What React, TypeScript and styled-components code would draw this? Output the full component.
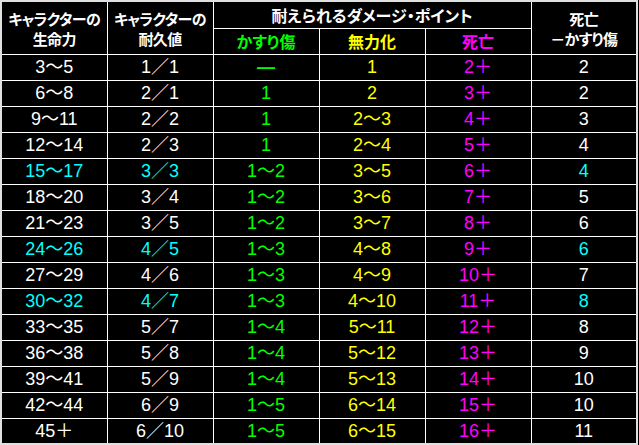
import styled, { createGlobalStyle } from "styled-components";

const GlobalStyle = createGlobalStyle`
  html, body {
    margin: 0;
    padding: 0;
    background: #000;
  }
  body {
    font-family: "Liberation Sans", "Noto Sans CJK JP", sans-serif;
  }
`;

const WHITE = "#ffffff";
const CYAN = "#00ffff";
const GREEN = "#00ff00";
const YELLOW = "#ffff00";
const MAGENTA = "#ff00ff";

const Table = styled.table`
  width: 638px;
  table-layout: fixed;
  border-collapse: collapse;
  background: #000;
  border: 2px solid #e0e0e0;
`;

const HeadRow = styled.tr<{ $h: number }>`
  height: ${(p) => p.$h}px;
`;

const HeadCell = styled.th<{ $color?: string; $tight?: boolean }>`
  border: 1px solid #fff;
  padding: ${(p) => (p.$tight ? "3px 0 0" : "0")};
  color: ${(p) => p.$color || WHITE};
  font-family: "Noto Sans CJK JP", sans-serif;
  font-feature-settings: "palt";
  font-size: ${(p) => (p.$tight ? 15 : 16)}px;
  font-weight: 700;
  letter-spacing: ${(p) => (p.$tight ? "-0.6px" : "0")};
  line-height: 20px;
  text-align: center;
  vertical-align: middle;
  white-space: nowrap;
`;

const HeadLine = styled.span`
  display: block;
  height: 20px;
  overflow: hidden;
`;

const Row = styled.tr`
  height: 26px;
`;

const Cell = styled.td<{ $color: string; $bold?: boolean }>`
  border: 1px solid #fff;
  padding: 0;
  color: ${(p) => p.$color};
  font-family: "Liberation Sans", "Noto Sans CJK JP", sans-serif;
  font-size: 18px;
  font-weight: ${(p) => (p.$bold ? 700 : 400)};
  line-height: 20px;
  text-align: center;
  vertical-align: middle;
  white-space: nowrap;
`;

type Entry = {
  life: string;
  dur: string;
  light: string;
  disable: string;
  death: string;
  diff: string;
  hi?: boolean;
};

const rows: Entry[] = [
  { life: "3～5", dur: "1／1", light: "—", disable: "1", death: "2＋", diff: "2" },
  { life: "6～8", dur: "2／1", light: "1", disable: "2", death: "3＋", diff: "2" },
  { life: "9～11", dur: "2／2", light: "1", disable: "2～3", death: "4＋", diff: "3" },
  { life: "12～14", dur: "2／3", light: "1", disable: "2～4", death: "5＋", diff: "4" },
  { life: "15～17", dur: "3／3", light: "1～2", disable: "3～5", death: "6＋", diff: "4", hi: true },
  { life: "18～20", dur: "3／4", light: "1～2", disable: "3～6", death: "7＋", diff: "5" },
  { life: "21～23", dur: "3／5", light: "1～2", disable: "3～7", death: "8＋", diff: "6" },
  { life: "24～26", dur: "4／5", light: "1～3", disable: "4～8", death: "9＋", diff: "6", hi: true },
  { life: "27～29", dur: "4／6", light: "1～3", disable: "4～9", death: "10＋", diff: "7" },
  { life: "30～32", dur: "4／7", light: "1～3", disable: "4～10", death: "11＋", diff: "8", hi: true },
  { life: "33～35", dur: "5／7", light: "1～4", disable: "5～11", death: "12＋", diff: "8" },
  { life: "36～38", dur: "5／8", light: "1～4", disable: "5～12", death: "13＋", diff: "9" },
  { life: "39～41", dur: "5／9", light: "1～4", disable: "5～13", death: "14＋", diff: "10" },
  { life: "42～44", dur: "6／9", light: "1～5", disable: "6～14", death: "15＋", diff: "10" },
  { life: "45＋", dur: "6／10", light: "1～5", disable: "6～15", death: "16＋", diff: "11" },
];

function App() {
  return (
    <>
      <GlobalStyle />
      <Table>
        <colgroup>
          <col style={{ width: 106 }} />
          <col style={{ width: 106 }} />
          <col style={{ width: 106 }} />
          <col style={{ width: 106 }} />
          <col style={{ width: 106 }} />
          <col style={{ width: 106 }} />
        </colgroup>
        <thead>
          <HeadRow $h={27}>
            <HeadCell rowSpan={2} $tight>
              <HeadLine>キャラクターの</HeadLine>
              <HeadLine>生命力</HeadLine>
            </HeadCell>
            <HeadCell rowSpan={2} $tight>
              <HeadLine>キャラクターの</HeadLine>
              <HeadLine>耐久値</HeadLine>
            </HeadCell>
            <HeadCell colSpan={3}>耐えられるダメージ・ポイント</HeadCell>
            <HeadCell rowSpan={2} $tight>
              <HeadLine>死亡</HeadLine>
              <HeadLine>－かすり傷</HeadLine>
            </HeadCell>
          </HeadRow>
          <HeadRow $h={26}>
            <HeadCell $color={GREEN}>かすり傷</HeadCell>
            <HeadCell $color={YELLOW}>無力化</HeadCell>
            <HeadCell $color={MAGENTA}>死亡</HeadCell>
          </HeadRow>
        </thead>
        <tbody>
          {rows.map((r) => {
            const base = r.hi ? CYAN : WHITE;
            return (
              <Row key={r.life}>
                <Cell $color={base}>{r.life}</Cell>
                <Cell $color={base}>{r.dur}</Cell>
                <Cell $color={GREEN} $bold={r.light === "—"}>
                  {r.light}
                </Cell>
                <Cell $color={YELLOW}>{r.disable}</Cell>
                <Cell $color={MAGENTA}>{r.death}</Cell>
                <Cell $color={base}>{r.diff}</Cell>
              </Row>
            );
          })}
        </tbody>
      </Table>
    </>
  );
}

export default App;
